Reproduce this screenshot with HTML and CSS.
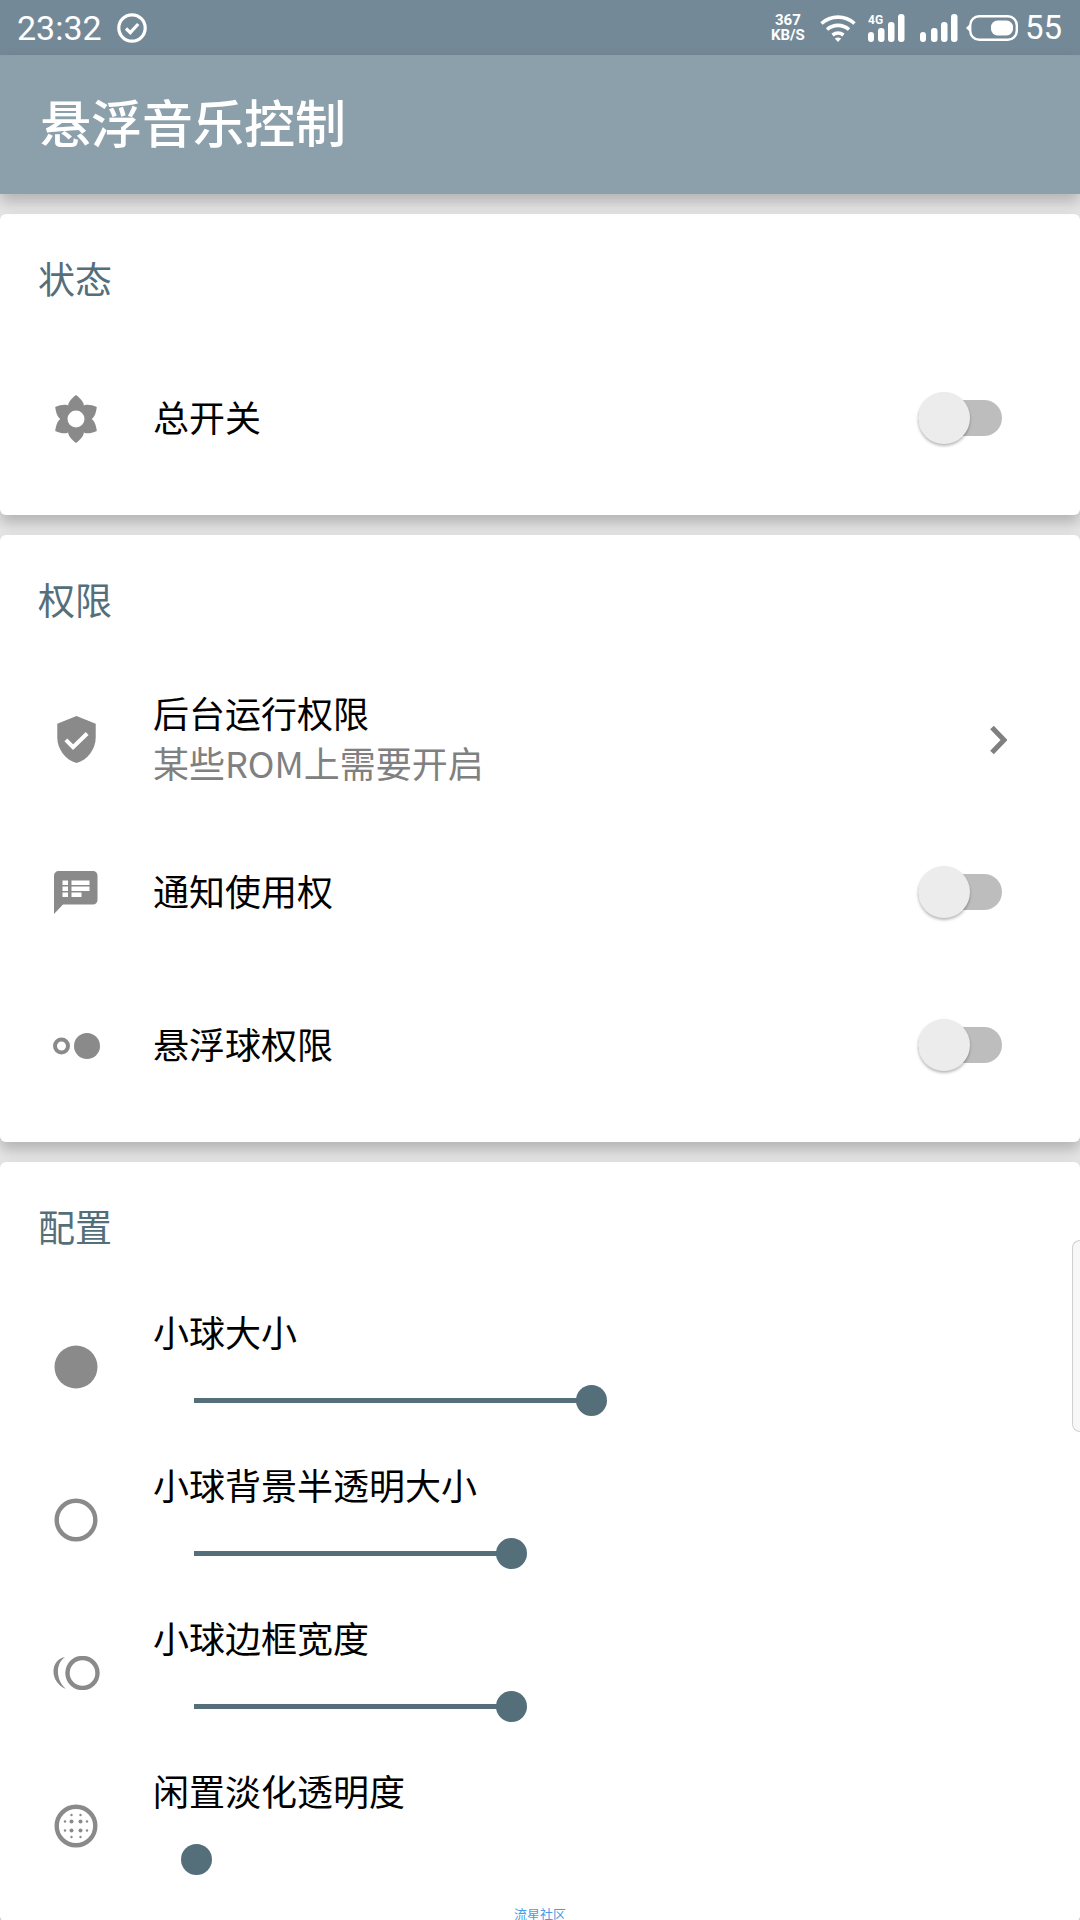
FILE: index.html
```html
<!DOCTYPE html>
<html lang="zh-CN">
<head>
    <meta charset="UTF-8">
    <meta name="viewport" content="width=device-width, initial-scale=1.0">
    <title>悬浮音乐控制</title>
    <link rel="stylesheet" href="styles.css">
</head>
<body>
    <div class="statusbar">
        <div class="status-left">
            <span class="clock">23:32</span>
            <svg class="status-check" width="30" height="30" viewBox="0 0 30 30">
                <circle cx="15" cy="15" r="13.2" fill="none" stroke="#fff" stroke-width="3.2"/>
                <path d="M9 15.5l4.3 4.2L21.2 11" fill="none" stroke="#fff" stroke-width="3.2"/>
            </svg>
        </div>
        <div class="status-right">
            <div class="speed"><span>367</span><span>KB/S</span></div>
            <svg class="wifi" width="36" height="28" viewBox="0 0 36 28">
                <path d="M1.5 9.5C11 1 25 1 34.5 9.5" fill="none" stroke="#fff" stroke-width="3.6"/>
                <path d="M7 15.5C13.5 10 22.5 10 29 15.5" fill="none" stroke="#fff" stroke-width="3.6"/>
                <path d="M12.5 21C16 18.5 20 18.5 23.5 21" fill="none" stroke="#fff" stroke-width="3.6"/>
                <path d="M14.8 24.5Q18 22.5 21.2 24.5L18 28z" fill="#fff"/>
            </svg>
            <svg class="signal" width="37" height="28" viewBox="0 0 37 28">
                <text x="0" y="10" class="net-label">4G</text>
                <rect x="0" y="18" width="6" height="10" rx="3" fill="#fff"/>
                <rect x="10" y="14" width="6.5" height="14" rx="3" fill="#fff"/>
                <rect x="20" y="8" width="6.5" height="20" rx="3" fill="#fff"/>
                <rect x="30" y="0" width="6.5" height="28" rx="3" fill="#fff"/>
            </svg>
            <svg class="signal" width="38" height="28" viewBox="0 0 38 28">
                <rect x="0" y="18" width="6" height="10" rx="3" fill="#fff"/>
                <rect x="11" y="14" width="6.5" height="14" rx="3" fill="#fff"/>
                <rect x="21" y="8" width="6.5" height="20" rx="3" fill="#fff"/>
                <rect x="31" y="0" width="6.5" height="28" rx="3" fill="#fff"/>
            </svg>
            <svg class="battery" width="52" height="26" viewBox="0 0 52 26">
                <path d="M0 13l3-3v6z" fill="#fff"/>
                <rect x="4.2" y="1.2" width="46.6" height="23.6" rx="9" fill="none" stroke="#fff" stroke-width="2.4"/>
                <rect x="25" y="5.5" width="22" height="15" rx="6.5" fill="#fff"/>
            </svg>
            <span class="level">55</span>
        </div>
    </div>

    <div class="appbar">悬浮音乐控制</div>

    <div class="content">
        <section class="card">
            <h2 class="card-title">状态</h2>
            <div class="row">
                <div class="row-icon">
                    <svg width="44" height="48" viewBox="-22 -24 44 48">
                        <g fill="#8a8a8a">
                            <path id="petal" d="M0 -24C5.500 -20 9 -15 7.600 -11.500L0 0L-7.600 -11.500C-9 -15 -5.500 -20 0 -24z"/>
                            <use href="#petal" transform="rotate(60)"/>
                            <use href="#petal" transform="rotate(120)"/>
                            <use href="#petal" transform="rotate(180)"/>
                            <use href="#petal" transform="rotate(240)"/>
                            <use href="#petal" transform="rotate(300)"/>
                        </g>
                        <circle r="8.500" fill="#fff"/>
                    </svg>
                </div>
                <div class="row-body"><div class="row-title">总开关</div></div>
                <div class="switch"><span class="switch-thumb"></span></div>
            </div>
        </section>

        <section class="card">
            <h2 class="card-title">权限</h2>
            <div class="row">
                <div class="row-icon">
                    <svg width="39" height="47" viewBox="3 1 18 22">
                        <path d="M12 1L3 4.600v6.400c0 5.550 3.840 10.740 9 12 5.160-1.260 9-6.450 9-12V4.600L12 1z" fill="#8a8a8a"/>
                        <path d="M7 12.200l3.400 3.400L17 9.200" fill="none" stroke="#fff" stroke-width="1.900"/>
                    </svg>
                </div>
                <div class="row-body">
                    <div class="row-title">后台运行权限</div>
                    <div class="row-sub">某些ROM上需要开启</div>
                </div>
                <svg class="chevron" width="18" height="30" viewBox="0 0 18 30">
                    <path d="M3 2.500L15 15L3 27.500" fill="none" stroke="#808080" stroke-width="5"/>
                </svg>
            </div>
            <div class="row">
                <div class="row-icon">
                    <svg width="44" height="43" viewBox="0 0 44 43">
                        <path d="M5 0H39C41.500 0 43.500 2 43.500 4.500V29C43.500 31.500 41.500 33.500 39 33.500H9L0 43V5C0 2 2 0 5 0z" fill="#8a8a8a"/>
                        <g fill="#fff">
                            <rect x="8.500" y="9.500" width="5.500" height="4.500"/>
                            <rect x="8.500" y="15.500" width="5.500" height="4.500"/>
                            <rect x="8.500" y="21.500" width="5.500" height="4.500"/>
                            <rect x="17.500" y="9.500" width="18" height="4.500"/>
                            <rect x="17.500" y="15.500" width="18" height="4.500"/>
                            <rect x="17.500" y="21.500" width="10" height="4.500"/>
                        </g>
                    </svg>
                </div>
                <div class="row-body"><div class="row-title">通知使用权</div></div>
                <div class="switch"><span class="switch-thumb"></span></div>
            </div>
            <div class="row">
                <div class="row-icon">
                    <svg class="icon-balls" width="48" height="26" viewBox="0 0 48 26">
                        <circle cx="8.500" cy="13" r="6.500" fill="none" stroke="#8a8a8a" stroke-width="4"/>
                        <circle cx="34" cy="13" r="13" fill="#8a8a8a"/>
                    </svg>
                </div>
                <div class="row-body"><div class="row-title">悬浮球权限</div></div>
                <div class="switch"><span class="switch-thumb"></span></div>
            </div>
        </section>

        <section class="card">
            <h2 class="card-title">配置</h2>
            <div class="row">
                <div class="row-icon">
                    <svg width="44" height="44" viewBox="0 0 44 44"><circle cx="22" cy="22" r="21.500" fill="#8a8a8a"/></svg>
                </div>
                <div class="row-body slider-body">
                    <div class="row-title">小球大小</div>
                    <div class="slider"><span class="slider-track" style="width: 397px"></span><span class="slider-thumb"></span></div>
                </div>
            </div>
            <div class="row">
                <div class="row-icon">
                    <svg width="44" height="44" viewBox="0 0 44 44"><circle cx="22" cy="22" r="19.300" fill="none" stroke="#8a8a8a" stroke-width="4.400"/></svg>
                </div>
                <div class="row-body slider-body">
                    <div class="row-title">小球背景半透明大小</div>
                    <div class="slider"><span class="slider-track" style="width: 317px"></span><span class="slider-thumb"></span></div>
                </div>
            </div>
            <div class="row">
                <div class="row-icon">
                    <svg width="48" height="34" viewBox="0 0 48 34">
                        <circle cx="30.500" cy="17" r="15" fill="none" stroke="#8a8a8a" stroke-width="4.400"/>
                        <path d="M13 1C-1 3 -4 25 14 33C5 26 2 9 13 1z" fill="#8a8a8a"/>
                    </svg>
                </div>
                <div class="row-body slider-body">
                    <div class="row-title">小球边框宽度</div>
                    <div class="slider"><span class="slider-track" style="width: 317px"></span><span class="slider-thumb"></span></div>
                </div>
            </div>
            <div class="row">
                <div class="row-icon">
                    <svg width="44" height="44" viewBox="-22 -22 44 44">
                        <circle r="19.300" fill="none" stroke="#8a8a8a" stroke-width="4.400"/>
                        <g fill="#8a8a8a">
                            <circle cx="-4.500" cy="-4.500" r="2"/><circle cx="4.500" cy="-4.500" r="2"/>
                            <circle cx="-4.500" cy="4.500" r="2"/><circle cx="4.500" cy="4.500" r="2"/>
                            <circle cx="-4.500" cy="-11" r="1.200"/><circle cx="4.500" cy="-11" r="1.200"/>
                            <circle cx="-4.500" cy="11" r="1.200"/><circle cx="4.500" cy="11" r="1.200"/>
                            <circle cx="-11" cy="-4.500" r="1.200"/><circle cx="11" cy="-4.500" r="1.200"/>
                            <circle cx="-11" cy="4.500" r="1.200"/><circle cx="11" cy="4.500" r="1.200"/>
                        </g>
                    </svg>
                </div>
                <div class="row-body slider-body">
                    <div class="row-title">闲置淡化透明度</div>
                    <div class="slider"><span class="slider-track" style="width: 2px"></span><span class="slider-thumb"></span></div>
                </div>
            </div>
        </section>
    </div>

    <div class="side-handle"></div>
    <div class="watermark">流星社区</div>
</body>
</html>
```

FILE: styles.css
```css
html, body {
    margin: 0;
    padding: 0;
}

body {
    position: relative;
    width: 1080px;
    height: 1920px;
    overflow: hidden;
    background-color: #e6e6e6;
    font-family: "Noto Sans CJK SC", Roboto, sans-serif;
    color: #000;
}

.statusbar {
    height: 55px;
    padding: 0 18px 0 17px;
    display: flex;
    align-items: center;
    justify-content: space-between;
    background-color: #748997;
    color: #fff;
    font-family: Roboto, sans-serif;
}

.status-left {
    display: flex;
    align-items: center;
    gap: 15px;
}

.clock {
    font-size: 34px;
    line-height: 52px;
}

.status-check {
    display: block;
}

.status-right {
    display: flex;
    align-items: center;
}

.speed {
    display: flex;
    flex-direction: column;
    align-items: center;
    width: 36px;
    margin-right: 14px;
    font-size: 15px;
    font-weight: 700;
    line-height: 15px;
}

.wifi {
    margin-right: 12px;
}

.signal {
    margin-right: 15px;
}

.signal + .signal {
    margin-right: 8px;
}

.net-label {
    font-family: Roboto, sans-serif;
    font-size: 12px;
    font-weight: 700;
    fill: #fff;
}

.level {
    margin-left: 7px;
    font-size: 33px;
    line-height: 52px;
}

.appbar {
    position: relative;
    z-index: 2;
    height: 139px;
    padding: 0 0 7px 40px;
    box-sizing: border-box;
    display: flex;
    align-items: center;
    background-color: #8ca0ac;
    color: #fff;
    font-size: 51px;
    font-weight: 500;
    box-shadow: 0 8px 14px rgba(0, 0, 0, 0.22);
}

.content {
    display: flex;
    flex-direction: column;
    gap: 20px;
    padding-top: 20px;
}

.card {
    position: relative;
    padding-bottom: 20px;
    background-color: #fff;
    border-radius: 6px;
    box-shadow: 0 8px 14px rgba(0, 0, 0, 0.22);
}

.card-title {
    height: 128px;
    margin: 0;
    padding: 42px 0 0 38px;
    box-sizing: border-box;
    color: #546e7a;
    font-size: 37px;
    font-weight: 400;
    line-height: 44px;
}

.row {
    height: 153px;
    display: flex;
    align-items: center;
}

.row-icon {
    width: 152px;
    flex: none;
    display: flex;
    justify-content: center;
}

.row-icon svg {
    display: block;
}

.row-icon .icon-balls {
    margin-left: 2px;
}

.row-body {
    flex: 1;
    margin-left: 1px;
    padding-bottom: 5px;
}

.row-title {
    font-size: 36px;
    line-height: 50px;
}

.row-sub {
    color: #808080;
    font-size: 36px;
    line-height: 50px;
}

.slider-body {
    align-self: flex-start;
    padding: 16px 0 0;
}

.slider {
    display: flex;
    align-items: center;
    height: 31px;
    margin: 29px 0 0 41px;
}

.slider-track {
    height: 5px;
    background-color: #546e7a;
}

.slider-thumb {
    width: 31px;
    height: 31px;
    margin-left: -15px;
    border-radius: 50%;
    background-color: #546e7a;
}

.switch {
    position: relative;
    width: 84px;
    height: 36px;
    margin: 0 78px 2px 0;
    background-color: #bdbdbd;
    border-radius: 18px;
}

.switch-thumb {
    position: absolute;
    left: 0;
    top: -8px;
    width: 52px;
    height: 52px;
    border-radius: 50%;
    background-color: #ececec;
    box-shadow: 0 2px 3px rgba(0, 0, 0, 0.28);
}

.chevron {
    margin-right: 73px;
}

.side-handle {
    position: absolute;
    right: 0;
    top: 1240px;
    width: 7px;
    height: 190px;
    background-color: #f7f7f7;
    border: 1px solid #d0d0d0;
    border-right: none;
    border-radius: 10px 0 0 10px;
}

.watermark {
    position: absolute;
    left: 0;
    right: 0;
    bottom: 0;
    text-align: center;
    color: #4a9be8;
    font-size: 13px;
    line-height: 13px;
}
```
